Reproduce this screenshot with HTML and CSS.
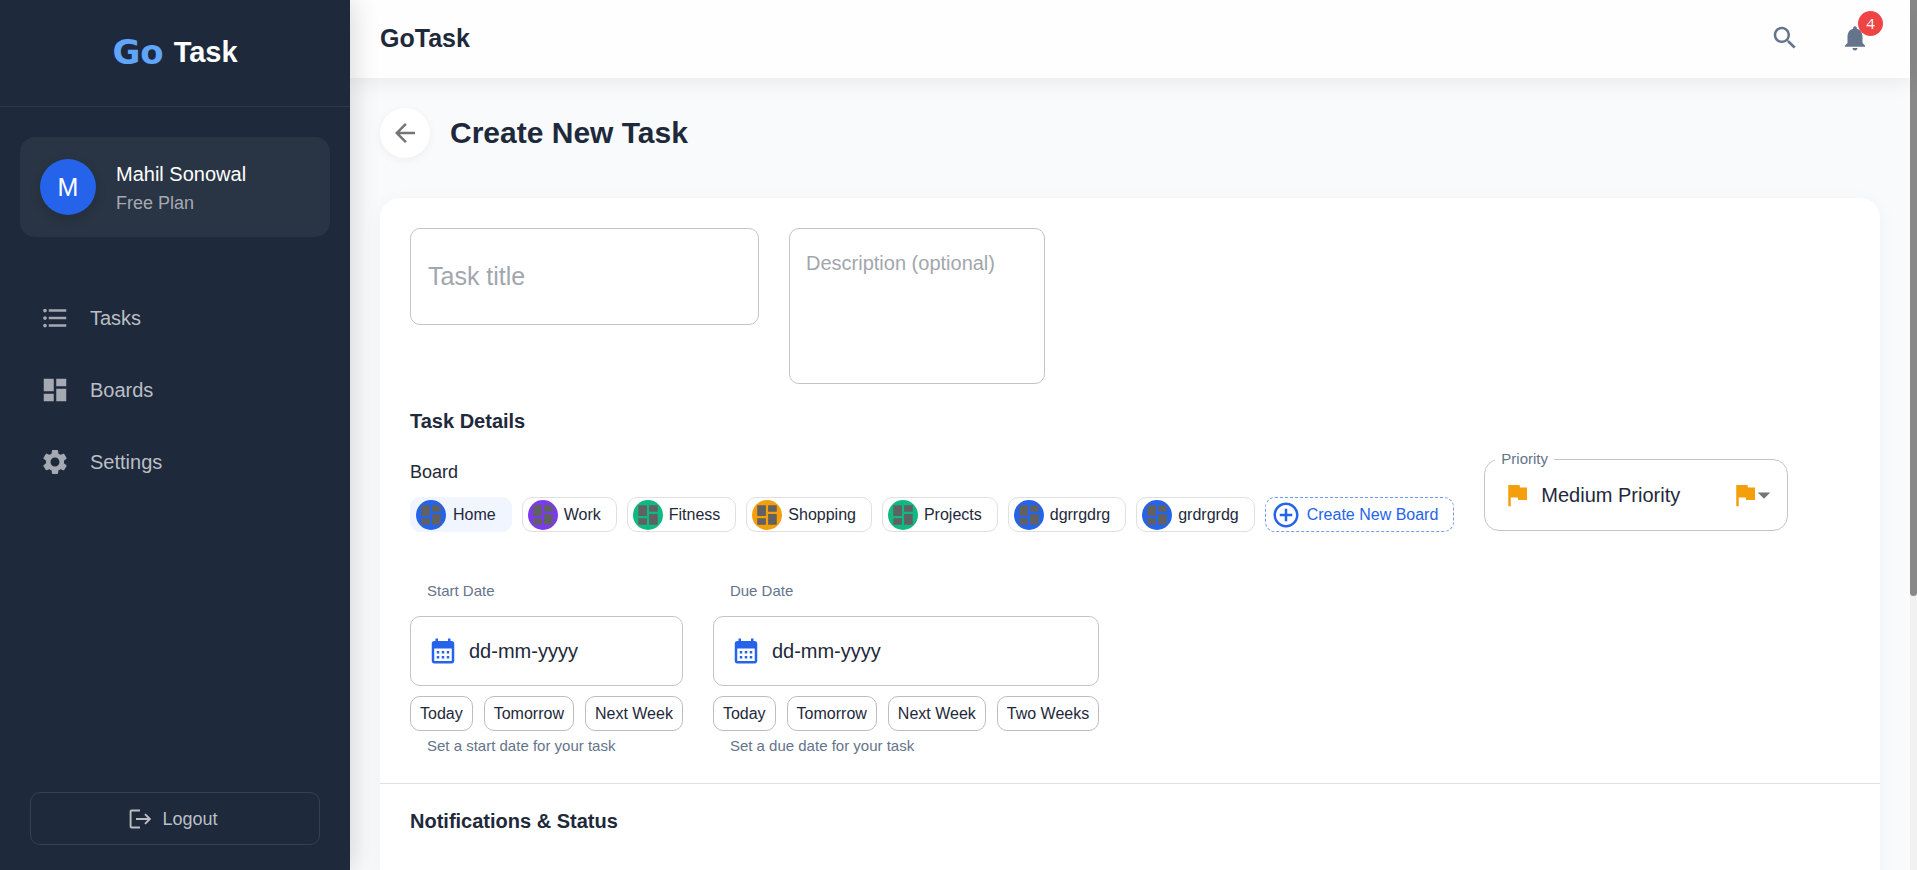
FILE: index.html
```html
<!DOCTYPE html>
<html lang="en">
<head>
<meta charset="utf-8">
<meta name="viewport" content="width=device-width, initial-scale=1">
<title>GoTask - Create New Task</title>
<link rel="stylesheet" href="styles.css">
</head>
<body>
<svg class="sprite" aria-hidden="true">
  <symbol id="i-dashboard" viewBox="0 0 24 24"><path d="M3 13h8V3H3v10zm0 8h8v-6H3v6zm10 0h8V11h-8v10zm0-18v6h8V3h-8z"/></symbol>
  <symbol id="i-list" viewBox="0 0 24 24"><path d="M4 10.500c-.83 0-1.500.67-1.500 1.500s.67 1.500 1.500 1.500 1.500-.67 1.500-1.500-.67-1.500-1.500-1.500zm0-6c-.83 0-1.500.67-1.500 1.500S3.170 7.500 4 7.500 5.500 6.830 5.500 6 4.830 4.500 4 4.500zm0 12c-.83 0-1.500.68-1.500 1.500s.68 1.500 1.500 1.500 1.500-.68 1.500-1.500-.67-1.500-1.500-1.500zM7 19h14v-2H7v2zm0-6h14v-2H7v2zm0-8v2h14V5H7z"/></symbol>
  <symbol id="i-settings" viewBox="0 0 24 24"><path d="M19.140 12.940c.04-.3.06-.61.06-.94 0-.32-.02-.64-.07-.94l2.030-1.580c.18-.14.23-.41.12-.61l-1.920-3.320c-.12-.22-.37-.29-.59-.22l-2.390.96c-.5-.38-1.030-.7-1.620-.94l-.36-2.540c-.04-.24-.24-.41-.48-.41h-3.840c-.24 0-.43.17-.47.41l-.36 2.540c-.59.24-1.130.57-1.620.94l-2.390-.96c-.22-.08-.47 0-.59.22L2.740 8.870c-.12.21-.08.47.12.61l2.030 1.580c-.05.3-.09.63-.09.94s.02.64.07.94l-2.030 1.580c-.18.14-.23.41-.12.61l1.920 3.320c.12.22.37.29.59.22l2.390-.96c.5.38 1.030.7 1.620.94l.36 2.540c.05.24.24.41.48.41h3.840c.24 0 .44-.17.47-.41l.36-2.540c.59-.24 1.130-.56 1.620-.94l2.390.96c.22.08.47 0 .59-.22l1.920-3.320c.12-.22.07-.47-.12-.61l-2.010-1.580zM12 15.600c-1.980 0-3.600-1.620-3.600-3.600s1.620-3.600 3.600-3.600 3.600 1.620 3.600 3.600-1.620 3.600-3.600 3.600z"/></symbol>
  <symbol id="i-search" viewBox="0 0 24 24"><path d="M15.500 14h-.79l-.28-.27C15.410 12.590 16 11.110 16 9.500 16 5.910 13.090 3 9.500 3S3 5.910 3 9.500 5.910 16 9.500 16c1.610 0 3.090-.59 4.230-1.570l.27.28v.79l5 4.990L20.490 19l-4.990-5zm-6 0C7.010 14 5 11.990 5 9.500S7.010 5 9.500 5 14 7.010 14 9.500 11.990 14 9.500 14z"/></symbol>
  <symbol id="i-bell" viewBox="0 0 24 24"><path d="M12 22c1.100 0 2-.9 2-2h-4c0 1.100.89 2 2 2zm6-6v-5c0-3.070-1.640-5.640-4.500-6.320V4c0-.83-.67-1.500-1.500-1.500s-1.500.67-1.500 1.500v.68C7.630 5.360 6 7.920 6 11v5l-2 2v1h16v-1l-2-2z"/></symbol>
  <symbol id="i-back" viewBox="0 0 24 24"><path d="M20 11H7.830l5.590-5.590L12 4l-8 8 8 8 1.410-1.410L7.830 13H20v-2z"/></symbol>
  <symbol id="i-plus" viewBox="0 0 24 24"><path d="M13 7h-2v4H7v2h4v4h2v-4h4v-2h-4V7zm-1-5C6.480 2 2 6.480 2 12s4.480 10 10 10 10-4.480 10-10S17.520 2 12 2zm0 18c-4.410 0-8-3.590-8-8s3.590-8 8-8 8 3.590 8 8-3.590 8-8 8z"/></symbol>
  <symbol id="i-flag" viewBox="0 0 24 24"><path d="M14.400 6 14 4H5v17h2v-7h5.600l.4 2h7V6z"/></symbol>
  <symbol id="i-calendar" viewBox="0 0 24 24"><path d="M19 4h-1V2h-2v2H8V2H6v2H5c-1.110 0-1.990.9-1.990 2L3 20c0 1.100.89 2 2 2h14c1.100 0 2-.9 2-2V6c0-1.100-.9-2-2-2zm0 16H5V10h14v10zM9 14H7v-2h2v2zm4 0h-2v-2h2v2zm4 0h-2v-2h2v2zm-8 4H7v-2h2v2zm4 0h-2v-2h2v2zm4 0h-2v-2h2v2z"/></symbol>
  <symbol id="i-caret" viewBox="0 0 24 24"><path d="m7 10 5 5 5-5z"/></symbol>
  <symbol id="i-logout" viewBox="0 0 22 20"><path d="M11 1.500H2.600q-1 0-1 1v15q0 1 1 1H11M7 10h13.500M16 5.200 20.800 10 16 14.800" fill="none" stroke="currentColor" stroke-width="1.900"/></symbol>
</svg>

<div class="app">
  <aside class="sidebar">
    <div class="brand"><span class="brand-go">Go</span><span class="brand-task">Task</span></div>
    <div class="profile">
      <span class="avatar">M</span>
      <div class="profile-text">
        <div class="profile-name">Mahil Sonowal</div>
        <div class="profile-plan">Free Plan</div>
      </div>
    </div>
    <nav class="nav">
      <a href="#tasks"><svg class="icon"><use href="#i-list"/></svg>Tasks</a>
      <a href="#boards"><svg class="icon"><use href="#i-dashboard"/></svg>Boards</a>
      <a href="#settings"><svg class="icon"><use href="#i-settings"/></svg>Settings</a>
    </nav>
    <button class="logout" type="button"><svg class="icon-logout"><use href="#i-logout"/></svg>Logout</button>
  </aside>

  <div class="page">
    <header class="topbar">
      <span class="topbar-title">GoTask</span>
      <div class="topbar-actions">
        <button class="icon-button" type="button" aria-label="Search"><svg class="icon"><use href="#i-search"/></svg></button>
        <button class="icon-button" type="button" aria-label="Notifications"><svg class="icon"><use href="#i-bell"/></svg><span class="badge">4</span></button>
      </div>
    </header>

    <main class="content">
      <div class="heading">
        <button class="back" type="button" aria-label="Back"><svg class="icon"><use href="#i-back"/></svg></button>
        <h1>Create New Task</h1>
      </div>

      <form class="card">
        <section class="section">
          <div class="row">
            <input class="field title-field" type="text" placeholder="Task title" aria-label="Task title">
            <textarea class="field description-field" placeholder="Description (optional)" aria-label="Description"></textarea>
          </div>

          <h2>Task Details</h2>
          <div class="row">
            <div class="boards">
              <div class="boards-label" id="board-label">Board</div>
              <div class="chips" role="group" aria-labelledby="board-label">
                <button class="chip selected" type="button"><span class="dot blue"><svg><use href="#i-dashboard"/></svg></span>Home</button>
                <button class="chip" type="button"><span class="dot purple"><svg><use href="#i-dashboard"/></svg></span>Work</button>
                <button class="chip" type="button"><span class="dot green"><svg><use href="#i-dashboard"/></svg></span>Fitness</button>
                <button class="chip" type="button"><span class="dot amber"><svg><use href="#i-dashboard"/></svg></span>Shopping</button>
                <button class="chip" type="button"><span class="dot green"><svg><use href="#i-dashboard"/></svg></span>Projects</button>
                <button class="chip" type="button"><span class="dot blue"><svg><use href="#i-dashboard"/></svg></span>dgrrgdrg</button>
                <button class="chip" type="button"><span class="dot blue"><svg><use href="#i-dashboard"/></svg></span>grdrgrdg</button>
                <button class="chip create" type="button"><svg class="icon"><use href="#i-plus"/></svg>Create New Board</button>
              </div>
            </div>
            <fieldset class="priority">
              <legend><label for="priority">Priority</label></legend>
              <div class="priority-control">
                <svg class="icon flag"><use href="#i-flag"/></svg>
                <select id="priority">
                  <option>Low Priority</option>
                  <option selected>Medium Priority</option>
                  <option>High Priority</option>
                </select>
                <svg class="icon flag"><use href="#i-flag"/></svg>
                <svg class="icon caret"><use href="#i-caret"/></svg>
              </div>
            </fieldset>
          </div>

          <div class="row dates">
            <div class="date">
              <label for="start">Start Date</label>
              <div class="date-box"><svg class="icon"><use href="#i-calendar"/></svg><input id="start" type="text" placeholder="dd-mm-yyyy" size="10"></div>
              <div class="quick-picks">
                <button class="quick" type="button">Today</button>
                <button class="quick" type="button">Tomorrow</button>
                <button class="quick" type="button">Next Week</button>
              </div>
              <p>Set a start date for your task</p>
            </div>
            <div class="date">
              <label for="due">Due Date</label>
              <div class="date-box"><svg class="icon"><use href="#i-calendar"/></svg><input id="due" type="text" placeholder="dd-mm-yyyy" size="10"></div>
              <div class="quick-picks">
                <button class="quick" type="button">Today</button>
                <button class="quick" type="button">Tomorrow</button>
                <button class="quick" type="button">Next Week</button>
                <button class="quick" type="button">Two Weeks</button>
              </div>
              <p>Set a due date for your task</p>
            </div>
          </div>
        </section>
        <section class="section status">
          <h2>Notifications &amp; Status</h2>
        </section>
      </form>
    </main>
  </div>
  <div class="scrollbar"><div class="thumb"></div></div>
</div>
</body>
</html>
```
FILE: styles.css
```css
* { box-sizing: border-box; }

body {
  margin: 0;
  background: #f8fafc;
  color: #1e293b;
  font: 20px/30px "Liberation Sans", Arial, sans-serif;
}

button, input, select, textarea {
  font: inherit;
  color: inherit;
  background: none;
  border: 0;
  margin: 0;
  padding: 0;
}

svg { display: block; flex: none; fill: currentColor; }
.sprite { position: absolute; width: 0; height: 0; }
.icon { width: 30px; height: 30px; }

.app { display: flex; height: 100vh; overflow: hidden; }

/* Sidebar */
.sidebar {
  position: relative;
  z-index: 2;
  display: flex;
  flex-direction: column;
  flex: 0 0 350px;
  background: #1e293b;
  color: #fff;
  box-shadow: 4px 0 24px rgba(0, 0, 0, 0.14);
}

.brand {
  display: flex;
  align-items: center;
  justify-content: center;
  gap: 10px;
  height: 107px;
  padding-bottom: 2px;
  border-bottom: 1px solid #2c3849;
  font-size: 29px;
  font-weight: 700;
}
.brand-go { color: #60a5fa; font-family: "DejaVu Sans", sans-serif; font-size: 34px; }

.profile {
  display: flex;
  align-items: center;
  gap: 20px;
  margin: 30px 20px 50px;
  padding: 20px;
  border-radius: 15px;
  background: #293544;
}
.avatar {
  display: grid;
  place-items: center;
  width: 56px;
  height: 56px;
  border-radius: 50%;
  background: #2563eb;
  box-shadow: 0 4px 12px rgba(0, 0, 0, 0.15);
  font-size: 25px;
}
.profile-text { padding-top: 2px; }
.profile-plan { color: #a5a9b1; font-size: 18px; line-height: 28px; }

.nav { display: flex; flex-direction: column; gap: 10px; }
.nav a {
  display: flex;
  align-items: center;
  gap: 20px;
  height: 62px;
  padding: 0 40px;
  color: #bbbfc4;
  text-decoration: none;
}
.nav .icon { color: #a5a9b1; }

.logout {
  display: flex;
  align-items: center;
  justify-content: center;
  gap: 11px;
  height: 53px;
  margin: auto 30px 25px;
  padding-right: 3px;
  border: 1px solid #354052;
  border-radius: 10px;
  color: #bbbfc4;
  font-size: 18px;
}
.icon-logout { width: 22px; height: 20px; }

/* Page */
.page { display: flex; flex-direction: column; flex: 1; min-width: 0; }
.topbar {
  position: relative;
  z-index: 1;
  display: flex;
  align-items: center;
  justify-content: space-between;
  flex: none;
  height: 78px;
  padding: 0 40px 2px 30px;
  background: #fefefe;
  box-shadow: 0 4px 20px rgba(0, 0, 0, 0.07);
}
.topbar-title { font-size: 25px; font-weight: 700; }
.topbar-actions { display: flex; gap: 40px; color: #64748b; }
.icon-button { position: relative; }
.badge {
  position: absolute;
  top: -12px;
  right: -13px;
  width: 25px;
  height: 25px;
  border-radius: 50%;
  background: #ef4444;
  color: #fff;
  font: 15px/25px "Open Sans", sans-serif;
  text-align: center;
}

.content { flex: 1; min-height: 0; padding: 30px; overflow: hidden; }
.heading { display: flex; align-items: center; gap: 20px; margin-bottom: 40px; }
.back {
  display: grid;
  place-items: center;
  width: 50px;
  height: 50px;
  border-radius: 50%;
  background: #fff;
  color: #757575;
  box-shadow: 0 2px 8px rgba(0, 0, 0, 0.05);
}
h1 { margin: 0; font-size: 30px; line-height: 40px; }
h2 { margin: 0; font-size: 20px; line-height: 30px; }

.card {
  border-radius: 20px;
  background: #fff;
  box-shadow: 0 4px 20px rgba(0, 0, 0, 0.04);
}
.section { padding: 30px 30px 24px; }
.row { display: flex; align-items: flex-start; flex-wrap: wrap; gap: 30px; }

.field {
  border: 1px solid #c4c4c4;
  border-radius: 10px;
  resize: none;
}
.field::placeholder { color: #a2a6ad; opacity: 1; }
.title-field { width: 349px; height: 97px; padding: 0 17px; font-size: 25px; }
.description-field { width: 256px; height: 156px; padding: 19px 16px; }

.section .row + h2 { margin: 22px 0 23px; }

/* Boards */
.boards-label { font-size: 18px; line-height: 26px; margin-bottom: 12px; }
.chips { display: flex; flex-wrap: wrap; gap: 10px; }
.chip {
  display: flex;
  align-items: center;
  gap: 6px;
  height: 35px;
  padding: 0 15px 0 5px;
  border: 1px solid #e0e0e0;
  border-radius: 10px;
  font-size: 16px;
}
.chip.selected { gap: 7px; background: #f0f5ff; border-color: #f0f5ff; }
.chip.create { border: 1px dashed #6f98f1; color: #2563eb; }
.dot {
  display: grid;
  place-items: center;
  width: 30px;
  height: 30px;
  border-radius: 50%;
  color: #616161;
}
.dot svg { width: 26px; height: 26px; }
.blue { background: #2563eb; }
.purple { background: #7c3aed; }
.green { background: #10b981; }
.amber { background: #f59e0b; }

/* Priority */
.priority {
  width: 304px;
  margin: -9px 0 0;
  padding: 0 8px 0 10px;
  border: 1px solid #c4c4c4;
  border-radius: 15px;
}
.priority legend {
  padding: 0 6px;
  color: #64748b;
  font-size: 15px;
  line-height: 18px;
}
.priority legend label { display: block; }
.priority-control { display: flex; align-items: center; height: 62px; padding: 0 0 8px 7px; }
.priority select {
  flex: 1;
  min-width: 0;
  padding-left: 9px;
  appearance: none;
}
.flag { color: #f59e0b; }
.caret { color: #757575; margin-left: -11px; }

/* Dates */
.dates { margin-top: 46px; }
.date label, .date p {
  display: block;
  margin: 0;
  padding-left: 17px;
  color: #64748b;
  font-size: 15px;
  line-height: 26px;
}
.date label { margin-bottom: 12px; }
.date p { margin-top: 2px; }
.date-box {
  display: flex;
  align-items: center;
  gap: 11px;
  height: 70px;
  margin-bottom: 10px;
  padding: 0 17px;
  border: 1px solid #c4c4c4;
  border-radius: 10px;
}
.date-box .icon { color: #2563eb; }
.date-box input { min-width: 0; flex: 1; }
.date-box input::placeholder { color: #1e293b; opacity: 1; }
.quick-picks { display: flex; gap: 11px; }
.quick {
  height: 35px;
  padding: 0 9px;
  border: 1px solid #bdbdbd;
  border-radius: 10px;
  font-size: 16px;
}

.status { min-height: 240px; border-top: 1px solid #e0e0e0; padding-top: 22px; }

/* Scroll track */
.scrollbar { flex: 0 0 7px; background: #f1f1f1; }
.thumb { height: 68.5%; border-radius: 0 0 4px 4px; background: #888; }
```
